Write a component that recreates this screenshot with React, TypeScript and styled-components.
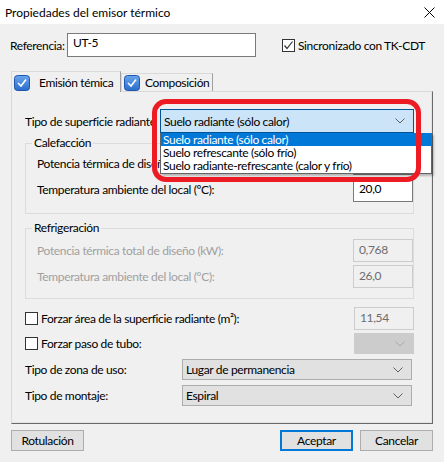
import React from "react";
import styled, { createGlobalStyle, css } from "styled-components";

const GlobalStyle = createGlobalStyle`
  html, body { margin: 0; padding: 0; background: #f0f0f0; }
  * { box-sizing: border-box; }
`;

const FONT = `Lato, "Noto Sans", "Liberation Sans", sans-serif`;

const Window = styled.div`
  position: relative;
  width: 444px;
  height: 462px;
  overflow: hidden;
  background: #f0f0f0;
  font-family: ${FONT};
  font-size: 12px;
  color: #000;
  display: flex;
  flex-direction: column;
  white-space: nowrap;
`;

const TitleBar = styled.div`
  height: 24px;
  flex: none;
  background: #fff;
  display: flex;
  align-items: center;
  justify-content: space-between;
  padding: 0 9px 0 5px;
  font-size: 12px;
`;

const Body = styled.div`
  display: flex;
  flex-direction: column;
  padding: 9px 11px 0 11px;
  letter-spacing: -0.35px;
`;

const TopRow = styled.div`
  display: flex;
  align-items: center;
  height: 24px;
`;

const RefLabel = styled.span`
  width: 57px;
  margin-left: -1px;
`;

const TextBox = styled.div<{ $w: number; $disabled?: boolean; $h?: number }>`
  width: ${(p) => p.$w}px;
  height: ${(p) => p.$h ?? 24}px;
  border: 1px solid ${(p) => (p.$disabled ? "#cccccc" : "#7a7a7a")};
  background: ${(p) => (p.$disabled ? "#f0f0f0" : "#fff")};
  color: ${(p) => (p.$disabled ? "#6d6d6d" : "#000")};
  padding: 2px 0 0 5px;
  line-height: 16px;
  flex: none;
`;

const CheckRow = styled.label`
  display: flex;
  align-items: center;
  gap: 3px;
`;

const Box = styled.span`
  width: 13px;
  height: 13px;
  border: 1px solid #333;
  background: #fff;
  display: inline-flex;
  align-items: center;
  justify-content: center;
  flex: none;
`;

const Tabs = styled.div`
  display: flex;
  align-items: flex-end;
  margin-top: 14px;
  height: 20px;
  position: relative;
  z-index: 1;
`;

const Tab = styled.div<{ $active?: boolean; $w: number }>`
  width: ${(p) => p.$w}px;
  display: flex;
  align-items: center;
  background: #f0f0f0;
  border: 1px solid #d9d9d9;
  border-right-color: #a0a0a0;
  border-bottom: none;
  padding-left: 2px;
  ${(p) =>
    p.$active
      ? css`
          height: 21px;
          margin-bottom: -1px;
          padding-top: 1px;
        `
      : css`
          height: 18px;
        `}
`;

const TabText = styled.span<{ $gap: number }>`
  margin-left: ${(p) => p.$gap}px;
`;

const Panel = styled.div`
  height: 333px;
  border: 1px solid #d9d9d9;
  border-right: 1px solid #696969;
  border-bottom: 1px solid #696969;
  box-shadow: inset -1px -1px 0 #e3e3e3;
  padding: 17px 0 0 13px;
  display: flex;
  flex-direction: column;
`;

const FormRow = styled.div<{ $label: number; $h: number; $mt?: number }>`
  display: grid;
  grid-template-columns: ${(p) => p.$label}px auto;
  align-items: center;
  height: ${(p) => p.$h}px;
  margin-top: ${(p) => p.$mt ?? 0}px;
`;

const ComboWrap = styled.div`
  position: relative;
`;

const Combo = styled.div<{ $w: number; $h: number; $variant: "focus" | "normal" | "disabled" }>`
  width: ${(p) => p.$w}px;
  height: ${(p) => p.$h}px;
  display: flex;
  align-items: center;
  justify-content: space-between;
  padding: 0 8px 0 3px;
  ${(p) =>
    p.$variant === "focus"
      ? css`
          background: #cce4f7;
          border: 1px solid #005499;
        `
      : p.$variant === "normal"
      ? css`
          background: #e1e1e1;
          border: 1px solid #adadad;
        `
      : css`
          background: #cccccc;
          border: 1px solid #cccccc;
        `}
`;

const DropList = styled.div`
  position: absolute;
  left: 0;
  top: 100%;
  width: 100%;
  background: #fff;
  border: 1px solid #646464;
  border-top: none;
  box-shadow: 2px 2px 2px rgba(0, 0, 0, 0.25);
  z-index: 5;
  padding-bottom: 1px;
`;

const DropItem = styled.div<{ $selected?: boolean }>`
  height: 13px;
  line-height: 13px;
  padding-left: 2px;
  ${(p) =>
    p.$selected &&
    css`
      background: #0078d7;
      color: #fff;
    `}
`;

const Group = styled.div<{ $mt: number; $pb: number }>`
  width: 389px;
  margin-top: ${(p) => p.$mt}px;
  border: 1px solid #dcdcdc;
  padding: 0 0 ${(p) => p.$pb}px 11px;
  display: flex;
  flex-direction: column;
  gap: 3px;
`;

const GroupTitle = styled.div<{ $first: number }>`
  align-self: flex-start;
  margin: -8px 0 ${(p) => p.$first - 10}px -5px;
  padding: 0 2px;
  background: #f0f0f0;
  line-height: 14px;
  height: 14px;
`;

const ValueRow = styled.div<{ $disabled?: boolean; $h?: number; $mt?: number; $w?: number }>`
  display: flex;
  align-items: center;
  justify-content: space-between;
  height: ${(p) => p.$h ?? 23}px;
  margin-top: ${(p) => p.$mt ?? 0}px;
  ${(p) => p.$w && css`width: ${p.$w}px;`}
  color: ${(p) => (p.$disabled ? "#a0a0a0" : "#000")};
`;

const Buttons = styled.div`
  display: flex;
  margin-top: 6px;
  gap: 7px;
`;

const Button = styled.div<{ $default?: boolean }>`
  width: 73px;
  height: 21px;
  display: flex;
  align-items: center;
  justify-content: center;
  background: #e1e1e1;
  border: 1px solid #adadad;
  ${(p) =>
    p.$default &&
    css`
      border: 2px solid #0078d7;
    `}
`;

const Spacer = styled.div`
  flex: 1;
`;

const SyncCheck = styled(CheckRow)`
  margin-right: 8px;
`;

const RefBox = styled(TextBox)`
  padding-top: 1px;
`;

const Annotation = styled.div`
  position: absolute;
  left: 152px;
  top: 99px;
  width: 269px;
  height: 83px;
  border: 5px solid #ed1c24;
  border-radius: 14px;
  pointer-events: none;
  z-index: 10;
`;

const Chevron = ({ color = "#606060" }: { color?: string }) => (
  <svg width="10" height="6" viewBox="0 0 10 6">
    <polyline points="0.5,0.5 5,5 9.5,0.5" fill="none" stroke={color} strokeWidth="1" />
  </svg>
);

const Check = () => (
  <svg width="11" height="11" viewBox="0 0 11 11">
    <polyline points="1.5,5.5 4,8.5 9.5,1.5" fill="none" stroke="#333" strokeWidth="1.2" />
  </svg>
);

const TabIcon = () => (
  <svg width="16" height="16" viewBox="0 0 16 16">
    <defs>
      <linearGradient id="tabg" x1="0" y1="0" x2="0" y2="1">
        <stop offset="0" stopColor="#6aa6ec" />
        <stop offset="1" stopColor="#2b6ccc" />
      </linearGradient>
    </defs>
    <rect x="0.5" y="0.5" width="15" height="15" rx="3" fill="url(#tabg)" stroke="#1f56ad" />
    <polyline points="4,8 7,11 12,4.5" fill="none" stroke="#fff" strokeWidth="1.6" />
  </svg>
);

const CloseIcon = () => (
  <svg width="11" height="11" viewBox="0 0 11 11">
    <line x1="0.5" y1="0.5" x2="10.5" y2="10.5" stroke="#000" strokeWidth="1" />
    <line x1="10.5" y1="0.5" x2="0.5" y2="10.5" stroke="#000" strokeWidth="1" />
  </svg>
);

export default function App() {
  return (
    <>
      <GlobalStyle />
      <Window>
        <TitleBar>
          <span>Propiedades del emisor térmico</span>
          <CloseIcon />
        </TitleBar>
        <Body>
          <TopRow>
            <RefLabel>Referencia:</RefLabel>
            <RefBox $w={189}>UT-5</RefBox>
            <Spacer />
            <SyncCheck>
              <Box>
                <Check />
              </Box>
              Sincronizado con TK-CDT
            </SyncCheck>
          </TopRow>

          <Tabs>
            <Tab $active $w={110}>
              <TabIcon />
              <TabText $gap={9}>Emisión témica</TabText>
            </Tab>
            <Tab $w={92}>
              <TabIcon />
              <TabText $gap={5}>Composición</TabText>
            </Tab>
          </Tabs>

          <Panel>
            <FormRow $label={135} $h={24}>
              <span>Tipo de superficie radiante</span>
              <ComboWrap>
                <Combo $w={254} $h={24} $variant="focus">
                  <span>Suelo radiante (sólo calor)</span>
                  <Chevron />
                </Combo>
                <DropList>
                  <DropItem $selected>Suelo radiante (sólo calor)</DropItem>
                  <DropItem>Suelo refrescante (sólo frío)</DropItem>
                  <DropItem>Suelo radiante-refrescante (calor y frío)</DropItem>
                </DropList>
              </ComboWrap>
            </FormRow>

            <Group $mt={10} $pb={12}>
              <GroupTitle $first={9}>Calefacción</GroupTitle>
              <ValueRow>
                <span>Potencia térmica de diseño (kW):</span>
                <TextBox $w={60} $h={23}>0,768</TextBox>
              </ValueRow>
              <ValueRow>
                <span>Temperatura ambiente del local (ºC):</span>
                <TextBox $w={60} $h={24}>20,0</TextBox>
              </ValueRow>
            </Group>

            <Group $mt={14} $pb={10}>
              <GroupTitle $first={11}>Refrigeración</GroupTitle>
              <ValueRow $disabled>
                <span>Potencia térmica total de diseño (kW):</span>
                <TextBox $w={60} $h={23} $disabled>0,768</TextBox>
              </ValueRow>
              <ValueRow $disabled>
                <span>Temperatura ambiente del local (°C):</span>
                <TextBox $w={60} $h={23} $disabled>26,0</TextBox>
              </ValueRow>
            </Group>

            <ValueRow $mt={8} $w={389}>
              <CheckRow>
                <Box />
                Forzar área de la superficie radiante (m²):
              </CheckRow>
              <TextBox $w={60} $h={23} $disabled>11,54</TextBox>
            </ValueRow>
            <ValueRow $mt={3} $w={389} $h={21}>
              <CheckRow>
                <Box />
                Forzar paso de tubo:
              </CheckRow>
              <Combo $w={60} $h={21} $variant="disabled">
                <span />
                <Chevron color="#a8a8a8" />
              </Combo>
            </ValueRow>

            <FormRow $label={157} $h={21} $mt={5}>
              <span>Tipo de zona de uso:</span>
              <Combo $w={230} $h={21} $variant="normal">
                <span>Lugar de permanencia</span>
                <Chevron />
              </Combo>
            </FormRow>
            <FormRow $label={157} $h={21} $mt={5}>
              <span>Tipo de montaje:</span>
              <Combo $w={230} $h={21} $variant="normal">
                <span>Espiral</span>
                <Chevron />
              </Combo>
            </FormRow>
          </Panel>

          <Buttons>
            <Button>Rotulación</Button>
            <Spacer />
            <Button $default>Aceptar</Button>
            <Button>Cancelar</Button>
          </Buttons>
        </Body>
        <Annotation />
      </Window>
    </>
  );
}
